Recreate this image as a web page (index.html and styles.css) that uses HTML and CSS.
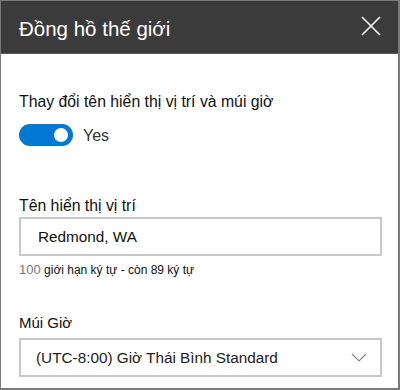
FILE: index.html
```html
<!DOCTYPE html>
<html lang="vi">
<head>
<meta charset="utf-8">
<link rel="stylesheet" href="styles.css">
</head>
<body>
<div class="panel">
  <div class="header">
    <h1 class="title">Đồng hồ thế giới</h1>
    <button class="close" aria-label="Đóng">
      <svg width="20" height="20" viewBox="0 0 20 20"><path d="M1 1 L19 19 M19 1 L1 19" stroke="#fff" stroke-width="1.6" fill="none"/></svg>
    </button>
  </div>
  <div class="body">
    <div class="field toggle-field">
      <div class="label">Thay đổi tên hiển thị vị trí và múi giờ</div>
      <div class="toggle-row">
        <span class="toggle"><span class="knob"></span></span>
        <span class="toggle-text">Yes</span>
      </div>
    </div>
    <div class="field name-field">
      <div class="label">Tên hiển thị vị trí</div>
      <div class="input">Redmond, WA</div>
      <div class="hint"><span class="num">100</span> giới hạn ký tự - còn 89 ký tự</div>
    </div>
    <div class="field tz-field">
      <div class="label small">Múi Giờ</div>
      <div class="select">
        <span>(UTC-8:00) Giờ Thái Bình Standard</span>
        <svg width="16" height="9" viewBox="0 0 16 9"><path d="M1 1 L8 8 L15 1" stroke="#8a8a8a" stroke-width="1.2" fill="none"/></svg>
      </div>
    </div>
  </div>
</div>
</body>
</html>
```

FILE: styles.css
```css
* { box-sizing: border-box; }
html, body { margin: 0; padding: 0; background: #fff; }
body { font-family: "Liberation Sans", Arial, sans-serif; color: #111; }
.panel {
  width: 400px;
  height: 390px;
  border: 1px solid #7a7a7a;
  border-width: 1px 2px 2px 1px;
  overflow: hidden;
}
.header {
  height: 53px;
  background: #3b3b3b;
  border-bottom: 1px solid #5a5a5a;
  display: flex;
  align-items: center;
  justify-content: space-between;
  padding: 0 17px 0 18px;
}
.title {
  margin: 0;
  font-size: 20.5px;
  font-weight: normal;
  color: #fff;
  padding-top: 4px;
}
.close {
  background: none;
  border: 0;
  padding: 0;
  width: 20px;
  height: 20px;
  display: flex;
  margin-top: -2px;
}
.body { padding: 38px 16px 0 18px; }
.label { font-size: 15.8px; line-height: 20px; color: #111; }
.label.small { font-size: 15px; }
.toggle-row { display: flex; align-items: center; margin-top: 12px; gap: 10px; }
.toggle {
  width: 54px;
  height: 22px;
  border-radius: 11px;
  background: #0078d4;
  display: flex;
  align-items: center;
  justify-content: flex-end;
  padding-right: 5px;
}
.knob { width: 14px; height: 14px; border-radius: 50%; background: #fff; }
.toggle-text { font-size: 16px; color: #333; margin-top: 2px; }
.name-field { margin-top: 50px; }
.input, .select {
  height: 39px;
  border: 2px solid #c8c8c8;
  display: flex;
  align-items: center;
  font-size: 15.3px;
  color: #111;
}
.input { padding-left: 17px; margin-top: 1px; }
.hint { font-size: 12px; margin-top: 6px; color: #111; }
.hint .num { color: #777; font-size: 13px; }
.tz-field { margin-top: 36px; }
.select { justify-content: space-between; padding: 0 13px 0 15px; color: #222; margin-top: 5px; }
```
